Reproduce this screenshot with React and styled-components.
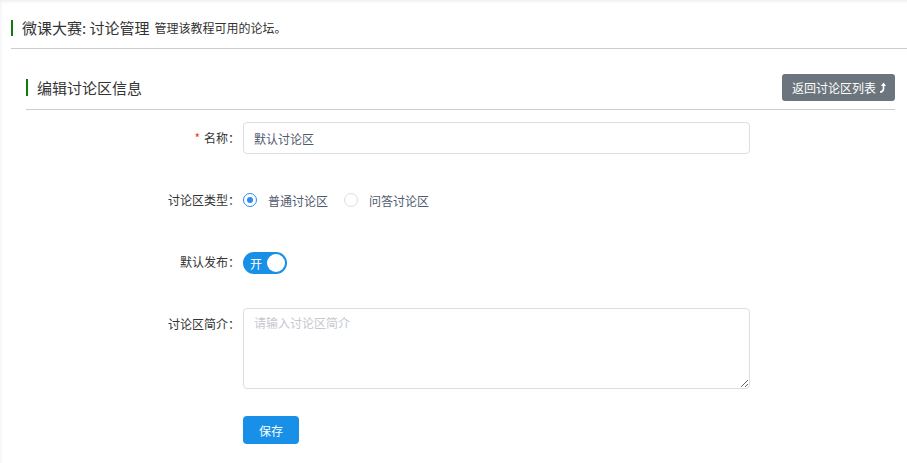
import React, { useState } from "react";
import styled, { createGlobalStyle } from "styled-components";

const GlobalStyle = createGlobalStyle`
  html, body {
    margin: 0;
    padding: 0;
    background: #fff;
  }
  body {
    font-family: "Microsoft YaHei", "Noto Sans CJK SC", "Liberation Sans", sans-serif;
    color: #333;
  }
  * { box-sizing: border-box; }
`;

const Page = styled.div`
  width: 907px;
  height: 463px;
  background: #fff;
  box-shadow: inset 2px 3px 3px -1px rgba(0, 0, 0, 0.06);
  padding: 0 0 0 11px;
  overflow: hidden;
`;

const Header = styled.div`
  height: 49px;
  display: flex;
  align-items: center;
  padding-top: 7px;
  border-bottom: 1px solid #ccc;
`;

const Mark = styled.span`
  display: inline-block;
  width: 2px;
  height: ${(p) => p.h || 16}px;
  background: #0a7d0a;
  margin-right: ${(p) => p.gap || 9}px;
`;

const HeadTitle = styled.span`
  font-size: 15px;
  font-weight: 400;
  color: #333;
`;

const HeadSub = styled.span`
  font-size: 12px;
  font-weight: 400;
  color: #333;
  margin-left: 5px;
`;

const Section = styled.div`
  padding: 24px 12px 0 15px;
`;

const SectionBar = styled.div`
  display: flex;
  align-items: center;
  justify-content: space-between;
  height: 37px;
  padding-bottom: 8px;
  border-bottom: 1px solid #ccc;
`;

const SectionTitle = styled.div`
  display: flex;
  align-items: center;
  font-size: 15px;
  font-weight: 400;
  color: #333;
`;

const BackButton = styled.button`
  display: flex;
  align-items: center;
  gap: 3px;
  height: 27px;
  padding: 0 8px 0 10px;
  border: none;
  border-radius: 3px;
  background: #6c757d;
  color: #fff;
  font-family: inherit;
  font-size: 12px;
  cursor: pointer;
`;

const Form = styled.div`
  display: flex;
  flex-direction: column;
  gap: 30px;
  padding-top: 12px;
`;

const Row = styled.div`
  display: grid;
  grid-template-columns: 217px 507px;
  align-items: ${(p) => (p.top ? "start" : "center")};
  min-height: 32px;
`;

const Label = styled.label`
  text-align: right;
  padding-right: 3px;
  font-size: 12px;
  color: #333;
  line-height: 32px;
`;

const Star = styled.span`
  color: #ed4014;
  margin-right: 4px;
`;

const Input = styled.input`
  height: 32px;
  width: 100%;
  border: 1px solid #dcdee2;
  border-radius: 4px;
  padding: 0 10px;
  font-family: inherit;
  font-size: 12px;
  color: #515a6e;
  outline: none;
`;

const TextArea = styled.textarea`
  height: 81px;
  width: 100%;
  border: 1px solid #dcdee2;
  border-radius: 4px;
  padding: 5px 10px;
  font-family: inherit;
  font-size: 12px;
  color: #515a6e;
  outline: none;
  resize: vertical;
  &::placeholder { color: #c5c8ce; }
`;

const Radios = styled.div`
  display: flex;
  align-items: center;
  gap: 16px;
`;

const RadioItem = styled.label`
  display: flex;
  align-items: center;
  gap: 11px;
  font-size: 12px;
  color: #515a6e;
  cursor: pointer;
`;

const Dot = styled.span`
  width: 14px;
  height: 14px;
  border-radius: 50%;
  border: 1px solid ${(p) => (p.on ? "#2d8cf0" : "#dcdee2")};
  display: flex;
  align-items: center;
  justify-content: center;
  &::after {
    content: "";
    width: 6px;
    height: 6px;
    border-radius: 50%;
    background: ${(p) => (p.on ? "#2d8cf0" : "transparent")};
  }
`;

const Switch = styled.button`
  width: 44px;
  height: 22px;
  border-radius: 11px;
  border: none;
  background: #1890e8;
  position: relative;
  padding: 0;
  cursor: pointer;
  color: #fff;
  font-family: inherit;
  font-size: 12px;
  text-align: left;
  padding-left: 7px;
  &::after {
    content: "";
    position: absolute;
    top: 2px;
    right: 2px;
    width: 18px;
    height: 18px;
    border-radius: 50%;
    background: #fff;
  }
`;

const SaveButton = styled.button`
  width: 56px;
  height: 28px;
  border: none;
  border-radius: 4px;
  background: #1890e8;
  color: #fff;
  font-family: inherit;
  font-size: 12px;
  cursor: pointer;
`;

const Actions = styled.div`
  padding-left: 217px;
  margin-top: -3px;
`;

const UpIcon = () => (
  <svg width="8" height="11" viewBox="0 0 8 11">
    <path d="M1 10 Q4 10 4.5 7 L4.5 3" stroke="#fff" strokeWidth="1.6" fill="none" />
    <path d="M2 4 L4.5 0.5 L7 4 Z" fill="#fff" />
  </svg>
);

export default function App() {
  const [type, setType] = useState(0);
  return (
    <>
      <GlobalStyle />
      <Page>
        <Header>
          <Mark h={16} gap={9} />
          <HeadTitle>微课大赛: 讨论管理</HeadTitle>
          <HeadSub>管理该教程可用的论坛。</HeadSub>
        </Header>
        <Section>
          <SectionBar>
            <SectionTitle>
              <Mark h={17} gap={9} />
              编辑讨论区信息
            </SectionTitle>
            <BackButton>
              返回讨论区列表 <UpIcon />
            </BackButton>
          </SectionBar>
          <Form>
            <Row>
              <Label>
                <Star>*</Star>名称：
              </Label>
              <Input defaultValue="默认讨论区" />
            </Row>
            <Row>
              <Label>讨论区类型：</Label>
              <Radios>
                <RadioItem onClick={() => setType(0)}>
                  <Dot on={type === 0} />
                  普通讨论区
                </RadioItem>
                <RadioItem onClick={() => setType(1)}>
                  <Dot on={type === 1} />
                  问答讨论区
                </RadioItem>
              </Radios>
            </Row>
            <Row>
              <Label>默认发布：</Label>
              <div>
                <Switch>开</Switch>
              </div>
            </Row>
            <Row top>
              <Label>讨论区简介：</Label>
              <TextArea placeholder="请输入讨论区简介" />
            </Row>
            <Actions>
              <SaveButton>保存</SaveButton>
            </Actions>
          </Form>
        </Section>
      </Page>
    </>
  );
}
